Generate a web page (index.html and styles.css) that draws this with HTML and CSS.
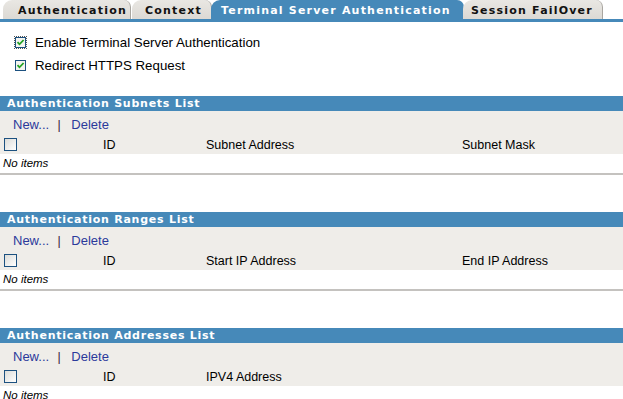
FILE: index.html
```html
<!DOCTYPE html>
<html lang="en">
<head>
    <meta charset="UTF-8">
    <title>Terminal Server Authentication</title>
    <link rel="stylesheet" href="styles.css">
</head>
<body>

    <!-- Tabs -->
    <div class="tabs">
        <div class="tab tab-auth">Authentication</div>
        <div class="tab tab-context">Context</div>
        <div class="tab tab-active">Terminal Server Authentication</div>
        <div class="tab tab-session">Session FailOver</div>
    </div>

    <!-- Options -->
    <div class="options">
        <label class="option">
            <span class="check focus">
                <svg width="11" height="11" viewBox="0 0 11 11"><rect x="0.5" y="0.5" width="10" height="10" fill="#f4f4f0" stroke="#1c5180"/><path d="M2.5 5.2 L4.5 7.3 L8.6 3" fill="none" stroke="#21a121" stroke-width="1.8"/></svg>
            </span>
            Enable Terminal Server Authentication
        </label>
        <label class="option">
            <span class="check">
                <svg width="11" height="11" viewBox="0 0 11 11"><rect x="0.5" y="0.5" width="10" height="10" fill="#f4f4f0" stroke="#1c5180"/><path d="M2.5 5.2 L4.5 7.3 L8.6 3" fill="none" stroke="#21a121" stroke-width="1.8"/></svg>
            </span>
            Redirect HTTPS Request
        </label>
    </div>

    <!-- Subnets -->
    <div class="section">
        <div class="section-title">Authentication Subnets List</div>
        <div class="toolbar">
            <a class="link">New...</a>
            <span class="sep">|</span>
            <a class="link">Delete</a>
        </div>
        <div class="list-head">
            <span class="col-check"><span class="box"></span></span>
            <span class="col-id">ID</span>
            <span class="col-a">Subnet Address</span>
            <span class="col-b">Subnet Mask</span>
        </div>
        <div class="empty">No items</div>
    </div>

    <!-- Ranges -->
    <div class="section">
        <div class="section-title">Authentication Ranges List</div>
        <div class="toolbar">
            <a class="link">New...</a>
            <span class="sep">|</span>
            <a class="link">Delete</a>
        </div>
        <div class="list-head">
            <span class="col-check"><span class="box"></span></span>
            <span class="col-id">ID</span>
            <span class="col-a">Start IP Address</span>
            <span class="col-b">End IP Address</span>
        </div>
        <div class="empty">No items</div>
    </div>

    <!-- Addresses -->
    <div class="section">
        <div class="section-title">Authentication Addresses List</div>
        <div class="toolbar">
            <a class="link">New...</a>
            <span class="sep">|</span>
            <a class="link">Delete</a>
        </div>
        <div class="list-head">
            <span class="col-check"><span class="box"></span></span>
            <span class="col-id">ID</span>
            <span class="col-a">IPV4 Address</span>
        </div>
        <div class="empty">No items</div>
    </div>

</body>
</html>
```

FILE: styles.css
```css
body {
    margin: 0;
    font-family: 'Liberation Sans', Arial, sans-serif;
    font-size: 12.5px;
    color: #000;
    background: #fff;
}
.tabs {
    display: flex;
    align-items: flex-end;
    height: 19px;
    padding-left: 3px;
    border-bottom: 3px solid #4689b9;
}
.tab {
    height: 19px;
    line-height: 21px;
    box-sizing: border-box;
    font-family: 'DejaVu Sans', sans-serif;
    font-weight: bold;
    font-size: 11px;
    letter-spacing: 1.2px;
    color: #111;
    background: linear-gradient(to bottom, #e9e7e3, #dcd9d4);
    border-radius: 9px 7px 0 0;
    border-right: 1px solid #a9a6a0;
    margin-right: -1px;
}
.tab-auth {
    width: 128px;
    padding-left: 15px;
}
.tab-context {
    width: 80px;
    padding-left: 13px;
    margin-left: 2px;
}
.tab-active {
    width: 253px;
    padding-left: 10px;
    background: #4689b9;
    color: #fff;
    border-right: none;
}
.tab-session {
    width: 140px;
    padding-left: 8px;
}
.options {
    padding: 9px 0 0 15px;
    height: 65px;
}
.option {
    display: flex;
    align-items: center;
    height: 23px;
    font-size: 13.3px;
}
.check {
    display: inline-flex;
    width: 11px;
    height: 11px;
    margin-right: 9px;
}
.check.focus {
    outline: 1px dotted #555;
}
.section {
    margin-bottom: 37px;
}
.section-title {
    height: 15px;
    line-height: 16px;
    background: #4689b9;
    color: #fff;
    font-family: 'DejaVu Sans', sans-serif;
    font-weight: bold;
    font-size: 11px;
    letter-spacing: 0.75px;
    padding-left: 7px;
}
.toolbar {
    background: #efede9;
    height: 23px;
    line-height: 28px;
    padding-left: 13px;
}
.link {
    color: #2b3a9b;
    font-size: 13px;
}
.sep {
    color: #3a1a3a;
    margin: 0 7px 0 5px;
}
.list-head {
    display: flex;
    align-items: center;
    background: #efede9;
    height: 20px;
    padding-top: 1px;
    box-sizing: border-box;
}
.col-check {
    width: 103px;
    padding-left: 4px;
    box-sizing: border-box;
}
.box {
    display: block;
    width: 11px;
    height: 11px;
    border: 1px solid #1c5180;
    background: linear-gradient(135deg, #dcdcd8, #ffffff);
}
.col-id {
    width: 103px;
}
.col-a {
    width: 256px;
}
.empty {
    height: 19px;
    line-height: 18px;
    font-style: italic;
    font-size: 11.5px;
    padding-left: 3px;
    border-bottom: 2px solid #c4c2bf;
}
```
